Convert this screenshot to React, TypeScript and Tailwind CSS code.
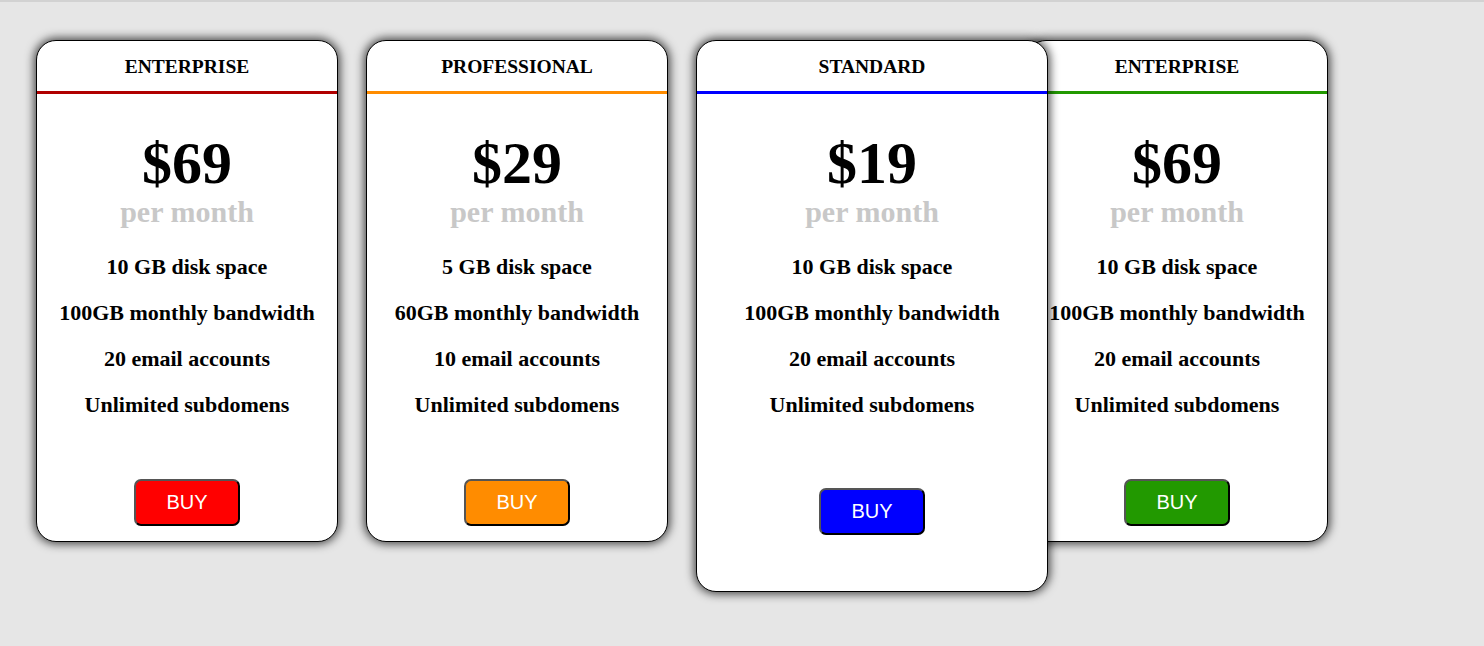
const plans = [
  {
    name: "ENTERPRISE",
    price: "$69",
    features: ["10 GB disk space", "100GB monthly bandwidth", "20 email accounts", "Unlimited subdomens"],
    line: "border-b-[#b00000]",
    button: "bg-[#ff0000]",
    featured: false,
  },
  {
    name: "PROFESSIONAL",
    price: "$29",
    features: ["5 GB disk space", "60GB monthly bandwidth", "10 email accounts", "Unlimited subdomens"],
    line: "border-b-[#ff8c00]",
    button: "bg-[#ff8c00]",
    featured: false,
  },
  {
    name: "STANDARD",
    price: "$19",
    features: ["10 GB disk space", "100GB monthly bandwidth", "20 email accounts", "Unlimited subdomens"],
    line: "border-b-[#0000ff]",
    button: "bg-[#0000ff]",
    featured: true,
  },
  {
    name: "ENTERPRISE",
    price: "$69",
    features: ["10 GB disk space", "100GB monthly bandwidth", "20 email accounts", "Unlimited subdomens"],
    line: "border-b-[#229900]",
    button: "bg-[#229900]",
    featured: false,
  },
];

type Plan = (typeof plans)[number];

function PriceCard({ plan }: { plan: Plan }) {
  return (
    <div
      className={
        plan.featured
          ? "relative z-10 -mr-[50px] flex h-[552px] w-[352px] shrink-0 flex-col items-center rounded-[20px] border border-black bg-white shadow-[0_0_10px_2px_rgba(0,0,0,0.7)]"
          : "flex h-[502px] w-[302px] shrink-0 flex-col items-center rounded-[20px] border border-black bg-white shadow-[0_0_10px_2px_rgba(0,0,0,0.7)]"
      }
    >
      <div
        className={`flex h-[53px] w-full items-center justify-center border-b-[3px] pt-[2px] text-[19.5px] font-bold leading-none ${plan.line}`}
      >
        {plan.name}
      </div>
      <div className="mt-[39px] text-[60px] font-bold leading-none">{plan.price}</div>
      <div className="mt-[4px] text-[30px] font-bold leading-none text-[#c8c8c8]">per month</div>
      <ul className="mt-[29px] flex flex-col items-center gap-[24px] text-[22px] font-bold leading-none">
        {plan.features.map((f) => (
          <li key={f} className="whitespace-nowrap">
            {f}
          </li>
        ))}
      </ul>
      <button
        className={`${plan.featured ? "mt-[72px]" : "mt-[63px]"} h-[47px] w-[106px] rounded-[7px] border-2 border-[#555] border-b-black border-r-black pb-[2px] font-['Liberation_Sans',Arial,sans-serif] text-[20px] text-white ${plan.button}`}
      >
        BUY
      </button>
    </div>
  );
}

export default function App() {
  return (
    <div className="min-h-[646px] border-t-2 border-[#d2d2d2] bg-[#e6e6e6] font-['Liberation_Serif','Times_New_Roman',serif] text-black">
      <div className="flex items-start gap-[28px] pl-[36px] pt-[38px]">
        {plans.map((p, i) => (
          <PriceCard key={i} plan={p} />
        ))}
      </div>
    </div>
  );
}
